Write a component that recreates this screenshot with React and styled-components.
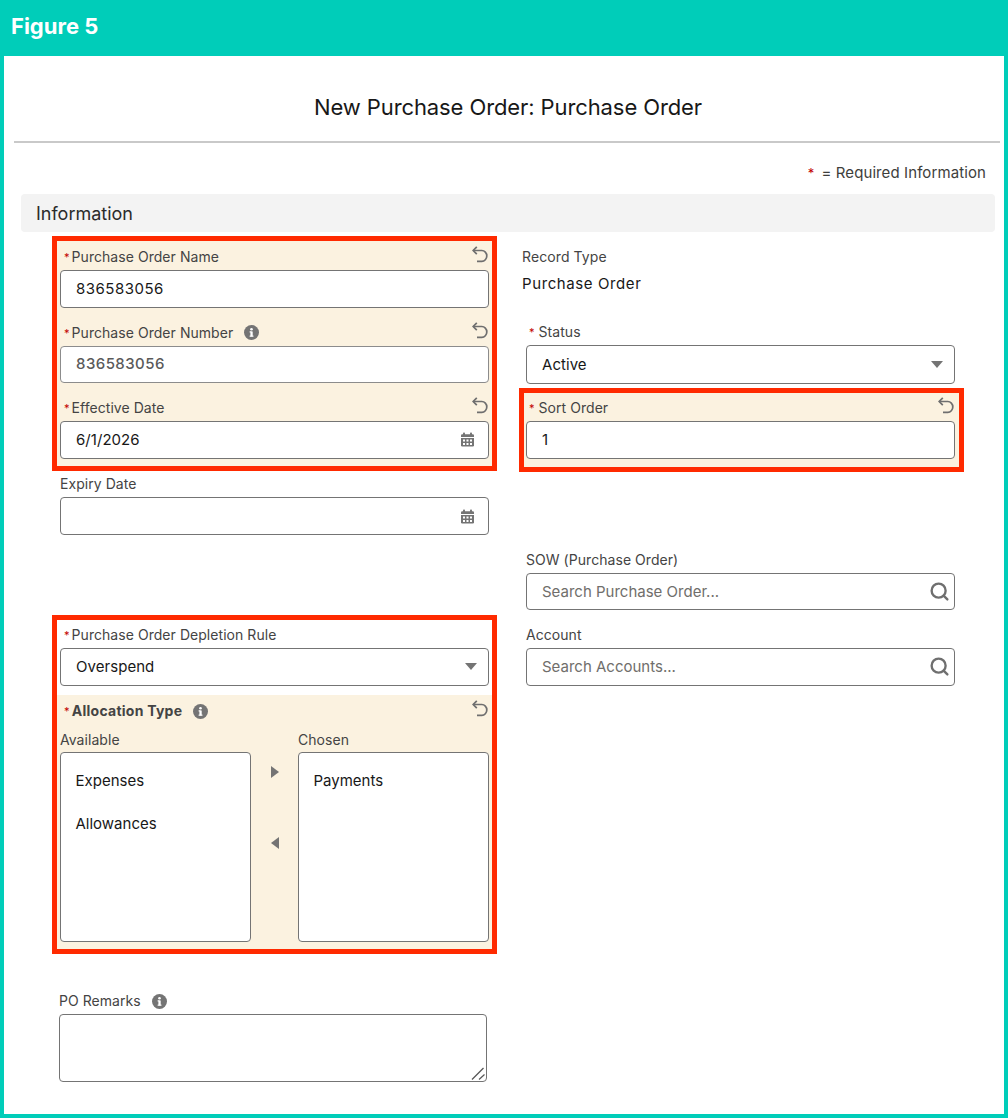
import React from "react";
import styled, { createGlobalStyle } from "styled-components";
import { Search } from "lucide-react";

const GlobalStyle = createGlobalStyle`
  html, body { margin: 0; padding: 0; background: #00cdb9; }
  body { font-family: "Inter", "Liberation Sans", sans-serif; color: #181818; }
`;

const Page = styled.div`
  width: 1008px;
  height: 1118px;
  box-sizing: border-box;
  background: #00cdb9;
  display: flex;
  flex-direction: column;
`;

const FigureBar = styled.div`
  height: 52px;
  flex: none;
  padding-left: 11px;
  color: #fff;
  font-weight: 700;
  font-size: 22px;
  line-height: 52px;
`;

const Sheet = styled.div`
  flex: 1;
  margin: 4px;
  background: #fff;
  display: flex;
  flex-direction: column;
`;

const Title = styled.h1`
  margin: 0 0 0 10px;
  height: 87px;
  width: 986px;
  box-sizing: border-box;
  padding-left: 2px;
  border-bottom: 2px solid #c9c9c9;
  text-align: center;
  font-weight: 400;
  font-size: 22px;
  line-height: 102px;
  letter-spacing: -0.1px;
  color: #181818;
`;

const RequiredNote = styled.div`
  height: 51px;
  padding-right: 18px;
  text-align: right;
  font-size: 15px;
  line-height: 60px;
  letter-spacing: 0.1px;
  color: #3e3e3c;
  b { color: #c20000; font-weight: 400; font-size: 13px; margin-right: 7px; }
`;

const SectionBar = styled.div`
  margin-left: 17px;
  width: 974px;
  height: 38px;
  box-sizing: border-box;
  padding-left: 15px;
  background: #f3f3f3;
  border-radius: 4px;
  font-size: 18px;
  line-height: 39px;
  color: #2b2b2b;
`;

const Columns = styled.div`
  margin: 4px 0 0 48px;
  display: grid;
  grid-template-columns: 445px 445px;
  column-gap: 22px;
  align-items: start;
`;

const Column = styled.div`
  display: flex;
  flex-direction: column;
`;

const RedBox = styled.div`
  border: 5px solid #ff2a00;
  margin-top: ${(p) => p.$top || 0}px;
  display: flex;
  flex-direction: column;
`;

const Shade = styled.div`
  background: ${(p) => (p.$plain ? "#fff" : "#fbf2e0")};
  padding: ${(p) => p.$pad};
  display: flex;
  flex-direction: column;
  gap: 14px;
`;

const Field = styled.div`
  margin-top: ${(p) => p.$top || 0}px;
  padding: 0 ${(p) => p.$right ?? p.$left ?? 3}px 0 ${(p) => p.$left ?? 3}px;
`;

const LabelRow = styled.div`
  height: 22px;
  margin-bottom: 2px;
  display: flex;
  align-items: center;
  font-size: 14px;
  line-height: 22px;
  letter-spacing: ${(p) => (p.$bold ? 0.25 : 0.05)}px;
  color: #444;
  padding-left: ${(p) => p.$indent || 0}px;
  font-weight: ${(p) => (p.$bold ? 700 : 400)};
`;

const Star = styled.span`
  color: #c20000;
  font-size: 11px;
  font-weight: 400;
  margin-right: ${(p) => p.$gap}px;
`;

const UndoMark = styled.svg`
  flex: none;
  align-self: flex-start;
  margin-left: auto;
  margin-right: 1px;
`;

const InputBox = styled.div`
  height: ${(p) => p.$h || 37.5}px;
  box-sizing: border-box;
  background: #fff;
  border: 1px solid ${(p) => p.$line || "#747474"};
  border-radius: 4px;
  padding: 0 11px ${(p) => p.$lift || 0}px 15px;
  display: flex;
  align-items: center;
  justify-content: space-between;
  font-size: 15px;
  font-weight: ${(p) => p.$weight || 400};
  letter-spacing: ${(p) => p.$spacing ?? 0.05}px;
  color: ${(p) => p.$color || "#181818"};
`;

const Caret = styled.span`
  width: 0;
  height: 0;
  border-left: 6.5px solid transparent;
  border-right: 6.5px solid transparent;
  border-top: 7px solid #747474;
`;

const LookupIcon = styled(Search)`
  flex: none;
  margin-right: -6.5px;
  color: #6f6f6f;
`;

const StaticField = styled.div`
  padding-left: 3px;
  margin-top: 10px;
`;

const StaticLabel = styled.div`
  font-size: 14px;
  line-height: 22px;
  letter-spacing: 0.1px;
  color: #444;
`;

const StaticValue = styled.div`
  margin-top: 5px;
  font-size: 15px;
  line-height: 22px;
  letter-spacing: 0.6px;
  color: #181818;
`;

const DualList = styled.div`
  display: grid;
  grid-template-columns: 191px 47px 191px;
  margin-top: -8px;
`;

const ListLabel = styled.div`
  height: 20px;
  margin-bottom: 2px;
  font-size: 14px;
  line-height: 20px;
  letter-spacing: 0.05px;
  color: #444;
`;

const ListBox = styled.div`
  height: 190px;
  box-sizing: border-box;
  padding-top: 6px;
  background: #fff;
  border: 1px solid #747474;
  border-radius: 4px;
`;

const ListItem = styled.div`
  height: 43px;
  padding-left: 14.5px;
  font-size: 15px;
  line-height: 43px;
  color: #181818;
`;

const Arrows = styled.div`
  display: flex;
  flex-direction: column;
  align-items: center;
  padding-top: 36px;
  gap: 59px;
`;

const Arrow = styled.span`
  width: 0;
  height: 0;
  border-top: 6px solid transparent;
  border-bottom: 6px solid transparent;
  border-left: ${(p) => (p.$left ? "none" : "8px solid #747474")};
  border-right: ${(p) => (p.$left ? "8px solid #747474" : "none")};
`;

const TextArea = styled.div`
  height: 68px;
  width: 428px;
  box-sizing: border-box;
  background: #fff;
  border: 1px solid #747474;
  border-radius: 4px;
  display: flex;
  align-items: flex-end;
  justify-content: flex-end;
`;

const InfoMark = styled.svg`
  margin-left: 11px;
  flex: none;
`;

const CalendarMark = styled.svg`
  flex: none;
  margin-right: 2px;
`;

function Info() {
  return (
    <InfoMark width="15" height="15" viewBox="0 0 15 15">
      <circle cx="7.5" cy="7.5" r="7.5" fill="#747474" />
      <rect x="6.4" y="6.5" width="2.3" height="5" fill="#fff" />
      <rect x="5.6" y="6.3" width="2" height="1.2" fill="#fff" />
      <rect x="5.6" y="10.6" width="3.9" height="1.1" fill="#fff" />
      <circle cx="7.5" cy="4.2" r="1.3" fill="#fff" />
    </InfoMark>
  );
}

function UndoIcon() {
  return (
    <UndoMark width="16" height="17" viewBox="0 0 16 17" fill="none" stroke="#6f6f6f" strokeWidth="1.7">
      <path d="M4.8 0.8 L1.2 4.5 L4.8 8.2" />
      <path d="M1.2 4.5 H9.8 a5 5.4 0 0 1 0 10.8 H5" />
    </UndoMark>
  );
}

function CalendarIcon() {
  return (
    <CalendarMark width="15" height="15" viewBox="0 0 15 15">
      <rect x="3" y="0.5" width="2" height="3" rx="0.8" fill="#747474" />
      <rect x="10" y="0.5" width="2" height="3" rx="0.8" fill="#747474" />
      <path d="M1 3.5a1.2 1.2 0 0 1 1.2-1.2h10.6A1.2 1.2 0 0 1 14 3.5V5H1z" fill="#747474" />
      <path d="M1 6h13v7.3a1.2 1.2 0 0 1-1.2 1.2H2.2A1.2 1.2 0 0 1 1 13.3z" fill="#747474" />
      {[3, 6.5, 10].map((x) => (
        <rect key={x} x={x} y="7.5" width="2" height="2" fill="#fff" />
      ))}
      {[3, 6.5, 10].map((x) => (
        <rect key={x} x={x} y="11" width="2" height="2" fill="#fff" />
      ))}
    </CalendarMark>
  );
}

function ResizeGrip() {
  return (
    <svg width="16" height="16" viewBox="0 0 16 16">
      <path d="M2 14.5 L13.5 3" stroke="#555" strokeWidth="1.2" fill="none" />
      <path d="M9 14.5 L14.5 9.5" stroke="#555" strokeWidth="1.2" fill="none" />
    </svg>
  );
}

function FieldLabel({ text, required, info, undo, bold, indent, starGap = 2 }) {
  return (
    <LabelRow $bold={bold} $indent={indent}>
      {required && <Star $gap={starGap}>*</Star>}
      {text}
      {info && <Info />}
      {undo && <UndoIcon />}
    </LabelRow>
  );
}

export default function App() {
  return (
    <Page>
      <GlobalStyle />
      <FigureBar>Figure 5</FigureBar>
      <Sheet>
        <Title>New Purchase Order: Purchase Order</Title>
        <RequiredNote>
          <b>*</b>= Required Information
        </RequiredNote>
        <SectionBar>Information</SectionBar>
        <Columns>
          <Column>
            <RedBox>
              <Shade $pad="5px 0 7.5px">
                <Field>
                  <FieldLabel text="Purchase Order Name" required undo indent={4} />
                  <InputBox $spacing={0.5}>836583056</InputBox>
                </Field>
                <Field>
                  <FieldLabel text="Purchase Order Number" required info undo indent={4} />
                  <InputBox $spacing={0.45} $color="#5a5a5a" $line="#8c8c8c" $weight={500} $lift={2}>
                    836583056
                  </InputBox>
                </Field>
                <Field>
                  <FieldLabel text="Effective Date" required undo indent={4} />
                  <InputBox>
                    6/1/2026
                    <CalendarIcon />
                  </InputBox>
                </Field>
              </Shade>
            </RedBox>
            <Field $left={8} $top={2}>
              <FieldLabel text="Expiry Date" />
              <InputBox $h={38}>
                <span />
                <CalendarIcon />
              </InputBox>
            </Field>
            <RedBox $top={80}>
              <Shade $plain $pad="4px 0 9px">
                <Field>
                  <FieldLabel text="Purchase Order Depletion Rule" required indent={4} />
                  <InputBox $h={38} $lift={1}>
                    Overspend
                    <Caret />
                  </InputBox>
                </Field>
              </Shade>
              <Shade $pad="5px 0 7px">
                <Field>
                  <FieldLabel text="Allocation Type" required bold info undo indent={4} />
                </Field>
                <Field>
                  <DualList>
                    <div>
                      <ListLabel>Available</ListLabel>
                      <ListBox>
                        <ListItem>Expenses</ListItem>
                        <ListItem>Allowances</ListItem>
                      </ListBox>
                    </div>
                    <Arrows>
                      <Arrow />
                      <Arrow $left />
                    </Arrows>
                    <div>
                      <ListLabel>Chosen</ListLabel>
                      <ListBox>
                        <ListItem>Payments</ListItem>
                      </ListBox>
                    </div>
                  </DualList>
                </Field>
              </Shade>
            </RedBox>
            <Field $left={7} $top={36}>
              <FieldLabel text="PO Remarks" info />
              <TextArea>
                <ResizeGrip />
              </TextArea>
            </Field>
          </Column>
          <Column>
            <StaticField>
              <StaticLabel>Record Type</StaticLabel>
              <StaticValue>Purchase Order</StaticValue>
            </StaticField>
            <Field $left={7} $right={9} $top={26}>
              <FieldLabel text="Status" required indent={3} starGap={4} />
              <InputBox $h={39}>
                Active
                <Caret />
              </InputBox>
            </Field>
            <RedBox $top={4}>
              <Shade $pad="4px 0 8.5px">
                <Field $left={2} $right={4}>
                  <FieldLabel text="Sort Order" required undo indent={3} starGap={4} />
                  <InputBox>1</InputBox>
                </Field>
              </Shade>
            </RedBox>
            <Field $left={7} $right={9} $top={77}>
              <FieldLabel text="SOW (Purchase Order)" />
              <InputBox $h={37} $color="#706e6b" $spacing={0}>
                Search Purchase Order...
                <LookupIcon size={21} strokeWidth={2.7} />
              </InputBox>
            </Field>
            <Field $left={7} $right={9} $top={14}>
              <FieldLabel text="Account" />
              <InputBox $h={38} $color="#706e6b" $spacing={0} $lift={1}>
                Search Accounts...
                <LookupIcon size={21} strokeWidth={2.7} />
              </InputBox>
            </Field>
          </Column>
        </Columns>
      </Sheet>
    </Page>
  );
}
